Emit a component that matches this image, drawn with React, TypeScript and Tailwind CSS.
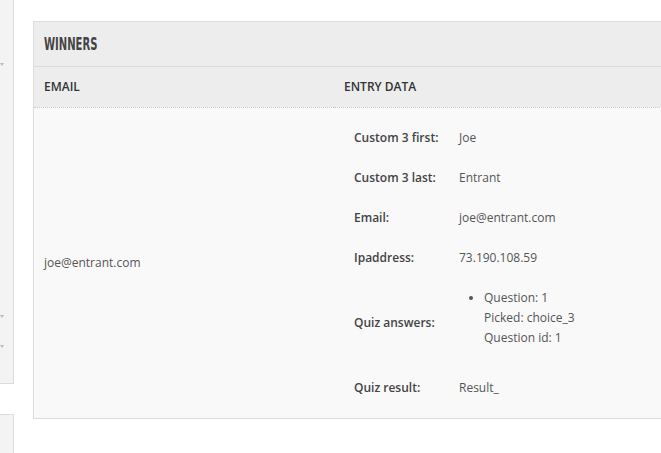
import React from 'react';

interface EntryRow {
  label: string;
  value: React.ReactNode;
}

const entryRows: EntryRow[] = [
  { label: 'Custom 3 first:', value: 'Joe' },
  { label: 'Custom 3 last:', value: 'Entrant' },
  { label: 'Email:', value: 'joe@entrant.com' },
  { label: 'Ipaddress:', value: '73.190.108.59' },
  {
    label: 'Quiz answers:',
    value: (
      <ul className="list-disc pl-[25px] mb-[10px]">
        <li>
          Question: 1<br />
          Picked: choice_3<br />
          Question id: 1
        </li>
      </ul>
    ),
  },
  { label: 'Quiz result:', value: 'Result_' },
];

const Sidebar: React.FC = () => (
  <div className="w-[14px] shrink-0 flex flex-col">
    <div className="relative h-[394px] bg-[#f3f3f3] border-r border-b border-[#dcdcdc]">
      <span className="absolute left-0 top-[63px] w-0 h-0 border-t-[3px] border-t-[#bbb] border-l-[2px] border-l-transparent border-r-[2px] border-r-transparent" />
      <span className="absolute left-0 top-[315px] w-0 h-0 border-t-[3px] border-t-[#bbb] border-l-[2px] border-l-transparent border-r-[2px] border-r-transparent" />
      <span className="absolute left-0 top-[345px] w-0 h-0 border-t-[3px] border-t-[#bbb] border-l-[2px] border-l-transparent border-r-[2px] border-r-transparent" />
    </div>
    <div className="mt-[30px] h-[40px] bg-[#f3f3f3] border-r border-t border-[#dcdcdc]" />
  </div>
);

const App: React.FC = () => {
  return (
    <div className="w-[661px] h-[453px] overflow-hidden bg-white flex font-['Open_Sans',sans-serif] text-[12px] leading-[20px] text-[#555]">
      <Sidebar />

      <div className="pl-[19px] pt-[21px] shrink-0">
        <div className="w-[700px] border border-[#dcdcdc] bg-[#f9f9f9]">
          <div className="h-[45px] bg-[#ededed] border-b border-[#dcdcdc] flex items-center px-[10px]">
            <h2 className="font-['DejaVu_Sans_Condensed',sans-serif] font-bold text-[18px] text-[#444] scale-x-[0.62] origin-left">
              WINNERS
            </h2>
          </div>

          <table className="w-full text-left border-collapse">
            <thead className="bg-[#ededed] text-[#333] uppercase">
              <tr className="border-b border-dotted border-[#c8c8c8]">
                <th className="w-[300px] h-[40px] px-[10px] font-semibold">Email</th>
                <th className="px-[10px] font-semibold">Entry Data</th>
              </tr>
            </thead>
            <tbody>
              <tr>
                <td className="px-[10px] align-middle">joe@entrant.com</td>
                <td className="p-[10px] align-top">
                  <table className="text-left">
                    <tbody>
                      {entryRows.map((row) => (
                        <tr key={row.label}>
                          <td className="w-[105px] p-[10px] font-semibold text-[#444] align-middle">
                            {row.label}
                          </td>
                          <td className="p-[10px] align-middle">{row.value}</td>
                        </tr>
                      ))}
                    </tbody>
                  </table>
                </td>
              </tr>
            </tbody>
          </table>
        </div>
      </div>
    </div>
  );
};

export default App;
